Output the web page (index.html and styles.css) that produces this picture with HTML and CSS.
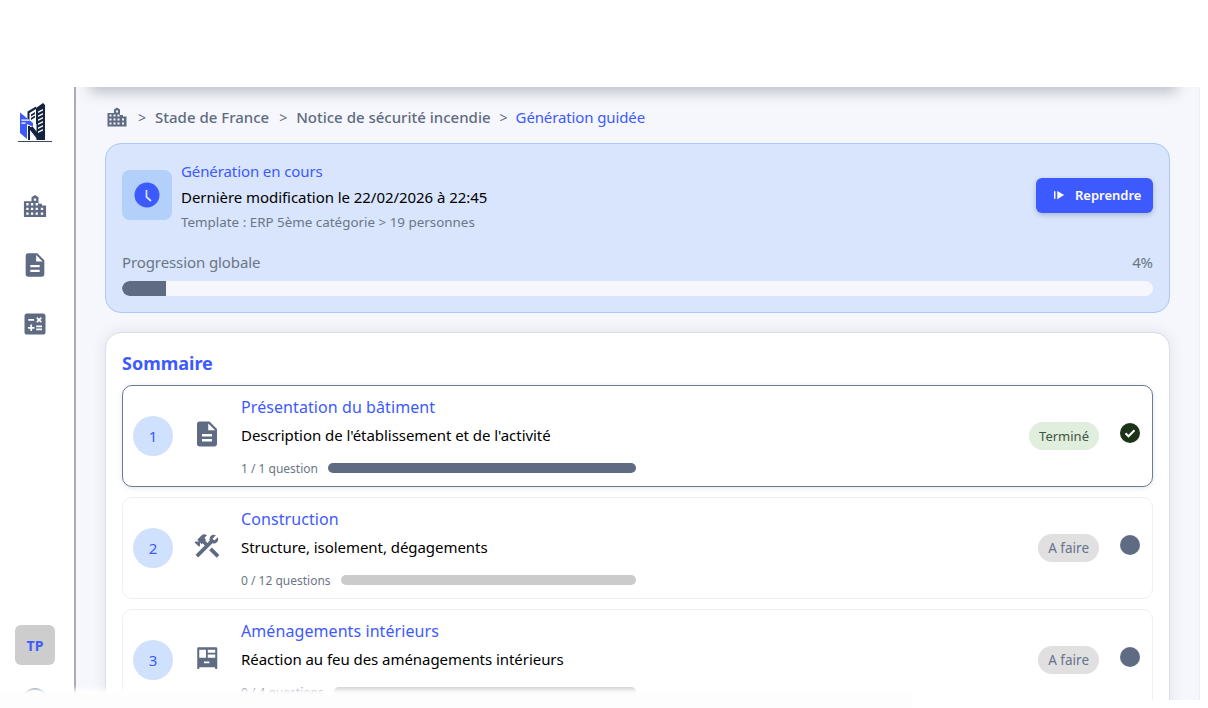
FILE: index.html
```html
<!DOCTYPE html>
<html lang="fr">
<head>
<meta charset="utf-8">
<title>Génération guidée</title>
<link rel="stylesheet" href="styles.css">
</head>
<body>
<div class="page">
  <div class="top-gap"></div>
  <div class="shell">
    <aside class="sidebar">
      <svg class="logo" viewBox="0 0 34 40" aria-hidden="true">
        <path class="logo-navy" d="M18 5 25 0l2 2v35h-9z"/>
        <path class="logo-navy" d="M9.500 8.500 18 3.500v2.500l-6.500 4v7l-2-1.500z"/>
        <path class="logo-navy" d="M13 11.500l4-2.500v2l-4 2.500zM13 15l4-2.500v2l-4 2.500z"/>
        <path class="logo-white" d="M20 8.500l5-2.500v1.500l-5 2.500zM20 12.500l5-2.500v1.500l-5 2.500zM20 16.500l5-2.500v1.500l-5 2.500zM20 20.500l5-2.500v1.500l-5 2.500zM20 24.500l5-2.500v1.500l-5 2.500zM20 28.500l5-2.500v1.500l-5 2.500z"/>
        <path class="logo-white" d="M17 21h1.500v16H17z"/>
        <path class="logo-blue" d="M2 9.500 15 20v4l-6-3v15l-7-6z"/>
        <path class="logo-white" d="M3.500 16.500h7l1.500 1.200H3.500zM3.500 19.500h4v1.200h-4z"/>
        <path class="logo-navy" d="M10 23h2v14h-2zM12 24l3 0 8 10v3h-3l-8-10z"/>
        <path class="logo-base" d="M0 38h34v1H0z"/>
      </svg>
      <nav class="side-nav">
        <svg class="side-icon" viewBox="0 0 24 24" aria-hidden="true"><path fill-rule="evenodd" d="M9 8V4.500L12 2.500l3 2V10h3v1.500h3.500v10h-19V8zM11 5.500V7.500h2V5.500zM4.500 9.500v2h2v-2zM8.500 9.500v2h2v-2zM12.500 9.500v2h2v-2zM4.500 13.500v2h2v-2zM8.500 13.500v2h2v-2zM12.500 13.500v2h2v-2zM17 13.500v2h2v-2zM4.500 17.500v2h2v-2zM8.500 17.500v2h2v-2zM12.500 17.500v2h2v-2zM17 17.500v2h2v-2z"/></svg>
        <svg class="side-icon" viewBox="0 0 24 24" aria-hidden="true"><path d="M14 2H6c-1.1 0-1.99.9-1.99 2L4 20c0 1.1.89 2 1.99 2H18c1.1 0 2-.9 2-2V8l-6-6zm2 16H8v-2h8v2zm0-4H8v-2h8v2zm-3-5V3.5L18.5 9H13z"/></svg>
        <svg class="side-icon" viewBox="0 0 24 24" aria-hidden="true"><path d="M19 3H5c-1.1 0-2 .9-2 2v14c0 1.1.9 2 2 2h14c1.1 0 2-.9 2-2V5c0-1.1-.9-2-2-2zm-5.97 4.06L14.09 6l1.41 1.41L16.91 6l1.06 1.06-1.41 1.41 1.41 1.41-1.06 1.06-1.41-1.4-1.41 1.41-1.06-1.06 1.41-1.41-1.41-1.42zm-6.78.66h5v1.5h-5v-1.5zM11.5 16h-2v2H8v-2H6v-1.5h2v-2h1.5v2h2V16zm6.5 1.25h-5v-1.5h5v1.5zm0-2.5h-5v-1.5h5v1.5z"/></svg>
      </nav>
      <div class="side-foot">
        <div class="avatar">TP</div>
        <div class="ring"></div>
      </div>
    </aside>
    <main class="main">
      <div class="top-shadow"></div>
      <div class="crumbs">
        <svg class="crumb-icon" viewBox="0 0 24 24" aria-hidden="true"><path fill-rule="evenodd" d="M9 8V4.500L12 2.500l3 2V10h3v1.500h3.500v10h-19V8zM11 5.500V7.500h2V5.500zM4.500 9.500v2h2v-2zM8.500 9.500v2h2v-2zM12.500 9.500v2h2v-2zM4.500 13.500v2h2v-2zM8.500 13.500v2h2v-2zM12.500 13.500v2h2v-2zM17 13.500v2h2v-2zM4.500 17.500v2h2v-2zM8.500 17.500v2h2v-2zM12.500 17.500v2h2v-2zM17 17.500v2h2v-2z"/></svg>
        <span class="sep">&gt;</span><span class="crumb">Stade de France</span>
        <span class="sep">&gt;</span><span class="crumb">Notice de sécurité incendie</span>
        <span class="sep sep-last">&gt;</span><span class="crumb crumb-active">Génération guidée</span>
      </div>
      <section class="banner">
        <div class="banner-top">
          <div class="clock-box">
            <svg class="clock" viewBox="0 0 26 26" aria-hidden="true"><circle cx="13" cy="13" r="12.5"/><path d="M12.500 8v7l4.500 4" fill="none" stroke="#d8e5fc" stroke-width="1.700"/></svg>
          </div>
          <div class="banner-text">
            <div class="banner-title">Génération en cours</div>
            <div class="banner-date">Dernière modification le 22/02/2026 à 22:45</div>
            <div class="banner-tpl">Template : ERP 5ème catégorie &gt; 19 personnes</div>
          </div>
          <button class="resume" type="button">
            <svg class="resume-icon" viewBox="0 0 12 10" aria-hidden="true"><path d="M0 1h1.600v8H0zM3.600 0.500 11 5l-7.400 4.500z"/></svg>
            Reprendre
          </button>
        </div>
        <div class="global-row"><span>Progression globale</span><span>4%</span></div>
        <div class="global-track"><div class="global-fill" style="width:4.3%"></div></div>
      </section>
      <section class="summary">
        <h2 class="summary-title">Sommaire</h2>
        <div class="steps">
          <article class="step step-current">
            <div class="num">1</div>
            <svg class="step-icon" viewBox="0 0 24 24" aria-hidden="true"><path d="M14 2H6c-1.1 0-1.99.9-1.99 2L4 20c0 1.1.89 2 1.99 2H18c1.1 0 2-.9 2-2V8l-6-6zm2 16H8v-2h8v2zm0-4H8v-2h8v2zm-3-5V3.5L18.5 9H13z"/></svg>
            <div class="step-body">
              <div class="step-title">Présentation du bâtiment</div>
              <div class="step-desc">Description de l'établissement et de l'activité</div>
              <div class="step-prog"><span class="count">1 / 1 question</span><div class="bar bar-done"></div></div>
            </div>
            <span class="pill pill-done">Terminé</span>
            <span class="state state-done"><svg viewBox="0 0 20 20" aria-hidden="true"><path d="M5.500 10.300l3 3 6-6" fill="none" stroke="#fff" stroke-width="2"/></svg></span>
          </article>
          <article class="step">
            <div class="num">2</div>
            <svg class="step-icon" viewBox="0 0 24 24" aria-hidden="true"><path d="M13.78 15.3l6 6 2.11-2.16-6-6zM17.5 10c1.93 0 3.5-1.57 3.5-3.5 0-.58-.16-1.12-.41-1.6l-2.7 2.7-1.49-1.49 2.7-2.7c-.48-.25-1.02-.41-1.6-.41C15.57 3 14 4.57 14 6.5c0 .41.08.8.21 1.16l-1.85 1.85-1.78-1.78.71-.71-1.41-1.41L12 3.49c-1.17-1.17-3.07-1.17-4.24 0L4.22 7.03l1.41 1.41H2.81l-.71.71 3.54 3.54.71-.71V9.15l1.41 1.41.71-.71 1.78 1.78-7.41 7.41 2.12 2.12L16.34 9.79c.36.13.75.21 1.16.21z"/></svg>
            <div class="step-body">
              <div class="step-title">Construction</div>
              <div class="step-desc">Structure, isolement, dégagements</div>
              <div class="step-prog"><span class="count">0 / 12 questions</span><div class="bar"></div></div>
            </div>
            <span class="pill">A faire</span>
            <span class="state"></span>
          </article>
          <article class="step">
            <div class="num">3</div>
            <svg class="step-icon" viewBox="0 0 24 24" aria-hidden="true"><path fill-rule="evenodd" d="M5.200 3.400h14a1 1 0 0 1 1 1V20.700h-1.500l-.4-1.300H6l-.4 1.300H4.200V4.400a1 1 0 0 1 1-1zM5.800 5.400v6.400h5.400V5.400zM12.600 5.400v2.400h6V5.400zM12.600 9.200v2.600h6V9.200zM9.600 14.800v1.400h4.300v-1.400z"/></svg>
            <div class="step-body">
              <div class="step-title">Aménagements intérieurs</div>
              <div class="step-desc">Réaction au feu des aménagements intérieurs</div>
              <div class="step-prog"><span class="count">0 / 4 questions</span><div class="bar"></div></div>
            </div>
            <span class="pill">A faire</span>
            <span class="state"></span>
          </article>
        </div>
      </section>
    </main>
  </div>
  <div class="smear"></div>
</div>
</body>
</html>
```
FILE: styles.css
```css
* { box-sizing: border-box; }
html, body { margin: 0; height: 100%; background: #fff; }
body { font-family: "Noto Sans", "Liberation Sans", sans-serif; overflow: hidden; }
.page { position: relative; width: 1208px; height: 708px; overflow: hidden; display: flex; flex-direction: column; }
.top-gap { height: 87px; flex: none; }
.shell { display: flex; height: 613px; flex: none; padding-right: 8px; }

.sidebar { width: 76px; flex: none; border-right: 2px solid #adadad; display: flex; flex-direction: column; align-items: center; padding-top: 16px; height: 621px; background: #fff; }
.logo { width: 34px; height: 40px; flex: none; margin-right: 4px; }
.logo-navy { fill: #14233f; }
.logo-blue { fill: #3d5afe; }
.logo-white { fill: #fff; }
.logo-base { fill: #3b4a63; }
.side-nav { display: flex; flex-direction: column; gap: 31px; margin-top: 49px; margin-right: 4px; }
.side-icon { width: 28px; height: 28px; display: block; fill: #5f6b82; }
.side-foot { margin-top: auto; display: flex; flex-direction: column; align-items: center; gap: 23px; margin-right: 4px; }
.avatar { width: 40px; height: 40px; border-radius: 6px; background: #cdcdcd; color: #3d5afe; font-weight: 700; font-size: 14px; display: flex; align-items: center; justify-content: center; }
.ring { width: 26px; height: 26px; border-radius: 50%; border: 2px solid #8d96a8; margin-bottom: -6px; }

.main { position: relative; flex: 1; background: #f6f7fc; overflow: hidden; padding: 18px 29px 0 29px; border-right: 1px solid #eceef5; }
.top-shadow { position: absolute; left: 16px; right: 24px; top: -12px; height: 12px; box-shadow: 0 3px 14px 2px rgba(60, 65, 80, .32); }

.crumbs { display: flex; align-items: center; height: 24px; color: #5f6b82; font-size: 15px; font-weight: 500; }
.crumb-icon { width: 24px; height: 24px; fill: #5f6b82; flex: none; margin-right: -1px; }
.sep { font-weight: 400; margin: 0 9px 0 10px; font-size: 14px; }
.sep-last { margin-left: 9px; margin-right: 8px; }
.crumb { white-space: nowrap; }
.crumb-active { color: #3d5afe; font-weight: 400; letter-spacing: -.12px; }

.banner { margin-top: 14px; height: 170px; border: 1px solid #a9c9fb; border-radius: 16px; background: #d8e5fc; padding: 13px 16px 16px; }
.banner-top { display: flex; align-items: center; }
.clock-box { width: 50px; height: 50px; border-radius: 8px; background: #b3d0fb; display: flex; align-items: center; justify-content: center; flex: none; }
.clock { width: 26px; height: 26px; fill: #3d5afe; }
.banner-text { margin: 2px 0 0 9px; flex: 1; }
.banner-title { font-size: 15px; line-height: 24px; color: #3d5afe; letter-spacing: -.1px; }
.banner-date { font-size: 15px; line-height: 28px; color: #000; letter-spacing: -.05px; }
.banner-tpl { font-size: 13.4px; line-height: 22px; color: #6b7587; }
.resume { display: flex; align-items: center; gap: 10px; width: 117px; height: 35px; padding: 0 0 0 18px; border: 0; border-radius: 6px; background: #3d5afe; color: #fff; font: 600 13px "Noto Sans", sans-serif; letter-spacing: -.02px; box-shadow: 0 2px 5px rgba(40, 50, 90, .25); }
.resume-icon { width: 11px; height: 10px; fill: #fff; }
.global-row { display: flex; justify-content: space-between; margin-top: 17px; font-size: 15px; line-height: 24px; color: #6b7587; letter-spacing: -.1px; }
.global-track { margin-top: 7px; height: 15px; border-radius: 8px; background: #f6f7fc; overflow: hidden; }
.global-fill { height: 100%; background: #5f6b82; border-radius: 8px 0 0 8px; }

.summary { margin-top: 19px; padding: 17px 16px 16px; border: 1px solid #dcdde5; border-radius: 16px; background: #fff; box-shadow: 0 0 14px rgba(70, 80, 120, .12); }
.summary-title { margin: 0; font-size: 18px; line-height: 27px; font-weight: 700; color: #3d5afe; }
.steps { margin-top: 8px; display: flex; flex-direction: column; gap: 10.1px; }
.step { height: 102px; flex: none; display: flex; align-items: center; padding: 0 12px 0 10px; border: 1px solid #eff0f6; border-radius: 10px; background: #fff; }
.step-current { border-color: #6e7a93; box-shadow: 0 1px 5px rgba(70, 80, 120, .15); }
.num { width: 40px; height: 40px; border-radius: 50%; background: #cfe1fd; color: #3d5afe; font-size: 15px; display: flex; align-items: center; justify-content: center; flex: none; }
.step-icon { width: 30px; height: 30px; fill: #5f6b82; margin: 0 19px 5px 19px; flex: none; }
.step-body { flex: 1; padding-top: 1px; }
.step-title { font-size: 16px; line-height: 24px; color: #3d5afe; letter-spacing: .08px; }
.step-desc { font-size: 15px; line-height: 32px; color: #000; letter-spacing: -.05px; }
.step-prog { display: flex; align-items: center; gap: 10px; width: 395px; margin-top: 7px; height: 20px; }
.count { font-size: 12px; color: #6b7587; white-space: nowrap; }
.bar { flex: 1; height: 10px; border-radius: 5px; background: #cbcbcb; }
.bar-done { background: #5f6b82; }
.pill { height: 28px; padding: 0 10px; border-radius: 14px; background: #e0e0e0; color: #68728a; font-size: 13.5px; display: flex; align-items: center; }
.pill-done { background: #e0eedd; color: #41553f; font-size: 13px; }
.state { width: 20px; height: 20px; border-radius: 50%; background: #5f6b82; margin: 0 0 6px 21px; flex: none; }
.state-done { background: #1c3318; }
.state svg { display: block; width: 20px; height: 20px; }

.smear { position: absolute; left: 0; top: 685px; width: 912px; height: 23px; background: linear-gradient(to bottom, rgba(255,255,255,0) 0, rgba(255,255,255,.3) 3px, rgba(255,255,255,.9) 7px, #fdfdfd 10px, #fdfdfd 100%); }
```
